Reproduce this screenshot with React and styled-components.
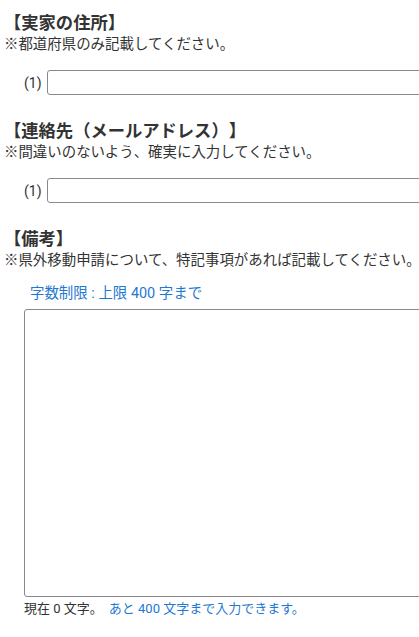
import React from 'react';
import styled, { createGlobalStyle } from 'styled-components';

const GlobalStyle = createGlobalStyle`
    html, body {
        margin: 0;
        padding: 0;
        background: #fff;
        overflow: hidden;
    }
    body {
        font-family: Roboto, "Noto Sans CJK JP", sans-serif;
        color: #333;
        text-spacing-trim: space-all;
    }
`;

const Page = styled.div`
    padding: 10px 0 0 4px;
    width: 520px;
`;

const Section = styled.section`
    margin-bottom: 24px;
`;

const Heading = styled.h2`
    margin: 1px 0 0;
    font-size: 17.3px;
    font-weight: 700;
    line-height: 24px;
    color: #333;
`;

const Note = styled.p`
    margin: 0;
    font-size: 14.45px;
    line-height: 20px;
    color: #333;
`;

const FieldRow = styled.div`
    display: flex;
    align-items: center;
    gap: 5px;
    margin-top: 15px;
    padding-left: 20px;
`;

const FieldLabel = styled.label`
    font-size: 14px;
    color: #333;
    width: 18px;
`;

const TextInput = styled.input`
    box-sizing: border-box;
    width: 420px;
    height: 25px;
    border: 1px solid #8a8791;
    border-radius: 3px;
    padding: 0 6px;
    font-size: 14px;
    outline: none;
`;

const Limit = styled.div`
    margin-top: 13px;
    padding-left: 26px;
    font-size: 14.45px;
    line-height: 20px;
    color: #1f78d1;
`;

const TextArea = styled.textarea`
    display: block;
    box-sizing: border-box;
    margin: 5px 0 0 20px;
    width: 440px;
    height: 288px;
    border: 1px solid #8a8791;
    border-radius: 3px;
    resize: none;
    outline: none;
    font-size: 14px;
`;

const Counter = styled.div`
    margin: 2px 0 0 20px;
    font-size: 13px;
    line-height: 20px;
    color: #333;
`;

const Remain = styled.span`
    color: #1f78d1;
    margin-left: 6px;
`;

const MAX = 400;

export default function App() {
    const [memo, setMemo] = React.useState('');
    return (
        <Page>
            <GlobalStyle />
            <Section>
                <Heading>【実家の住所】</Heading>
                <Note>※都道府県のみ記載してください。</Note>
                <FieldRow>
                    <FieldLabel>(1)</FieldLabel>
                    <TextInput type="text" />
                </FieldRow>
            </Section>
            <Section>
                <Heading>【連絡先（メールアドレス）】</Heading>
                <Note>※間違いのないよう、確実に入力してください。</Note>
                <FieldRow>
                    <FieldLabel>(1)</FieldLabel>
                    <TextInput type="text" />
                </FieldRow>
            </Section>
            <Section>
                <Heading>【備考】</Heading>
                <Note>※県外移動申請について、特記事項があれば記載してください。</Note>
                <Limit>字数制限 : 上限 {MAX} 字まで</Limit>
                <TextArea value={memo} onChange={e => setMemo(e.target.value)} maxLength={MAX} />
                <Counter>
                    現在 {memo.length} 文字。
                    <Remain>あと {MAX - memo.length} 文字まで入力できます。</Remain>
                </Counter>
            </Section>
        </Page>
    );
}
